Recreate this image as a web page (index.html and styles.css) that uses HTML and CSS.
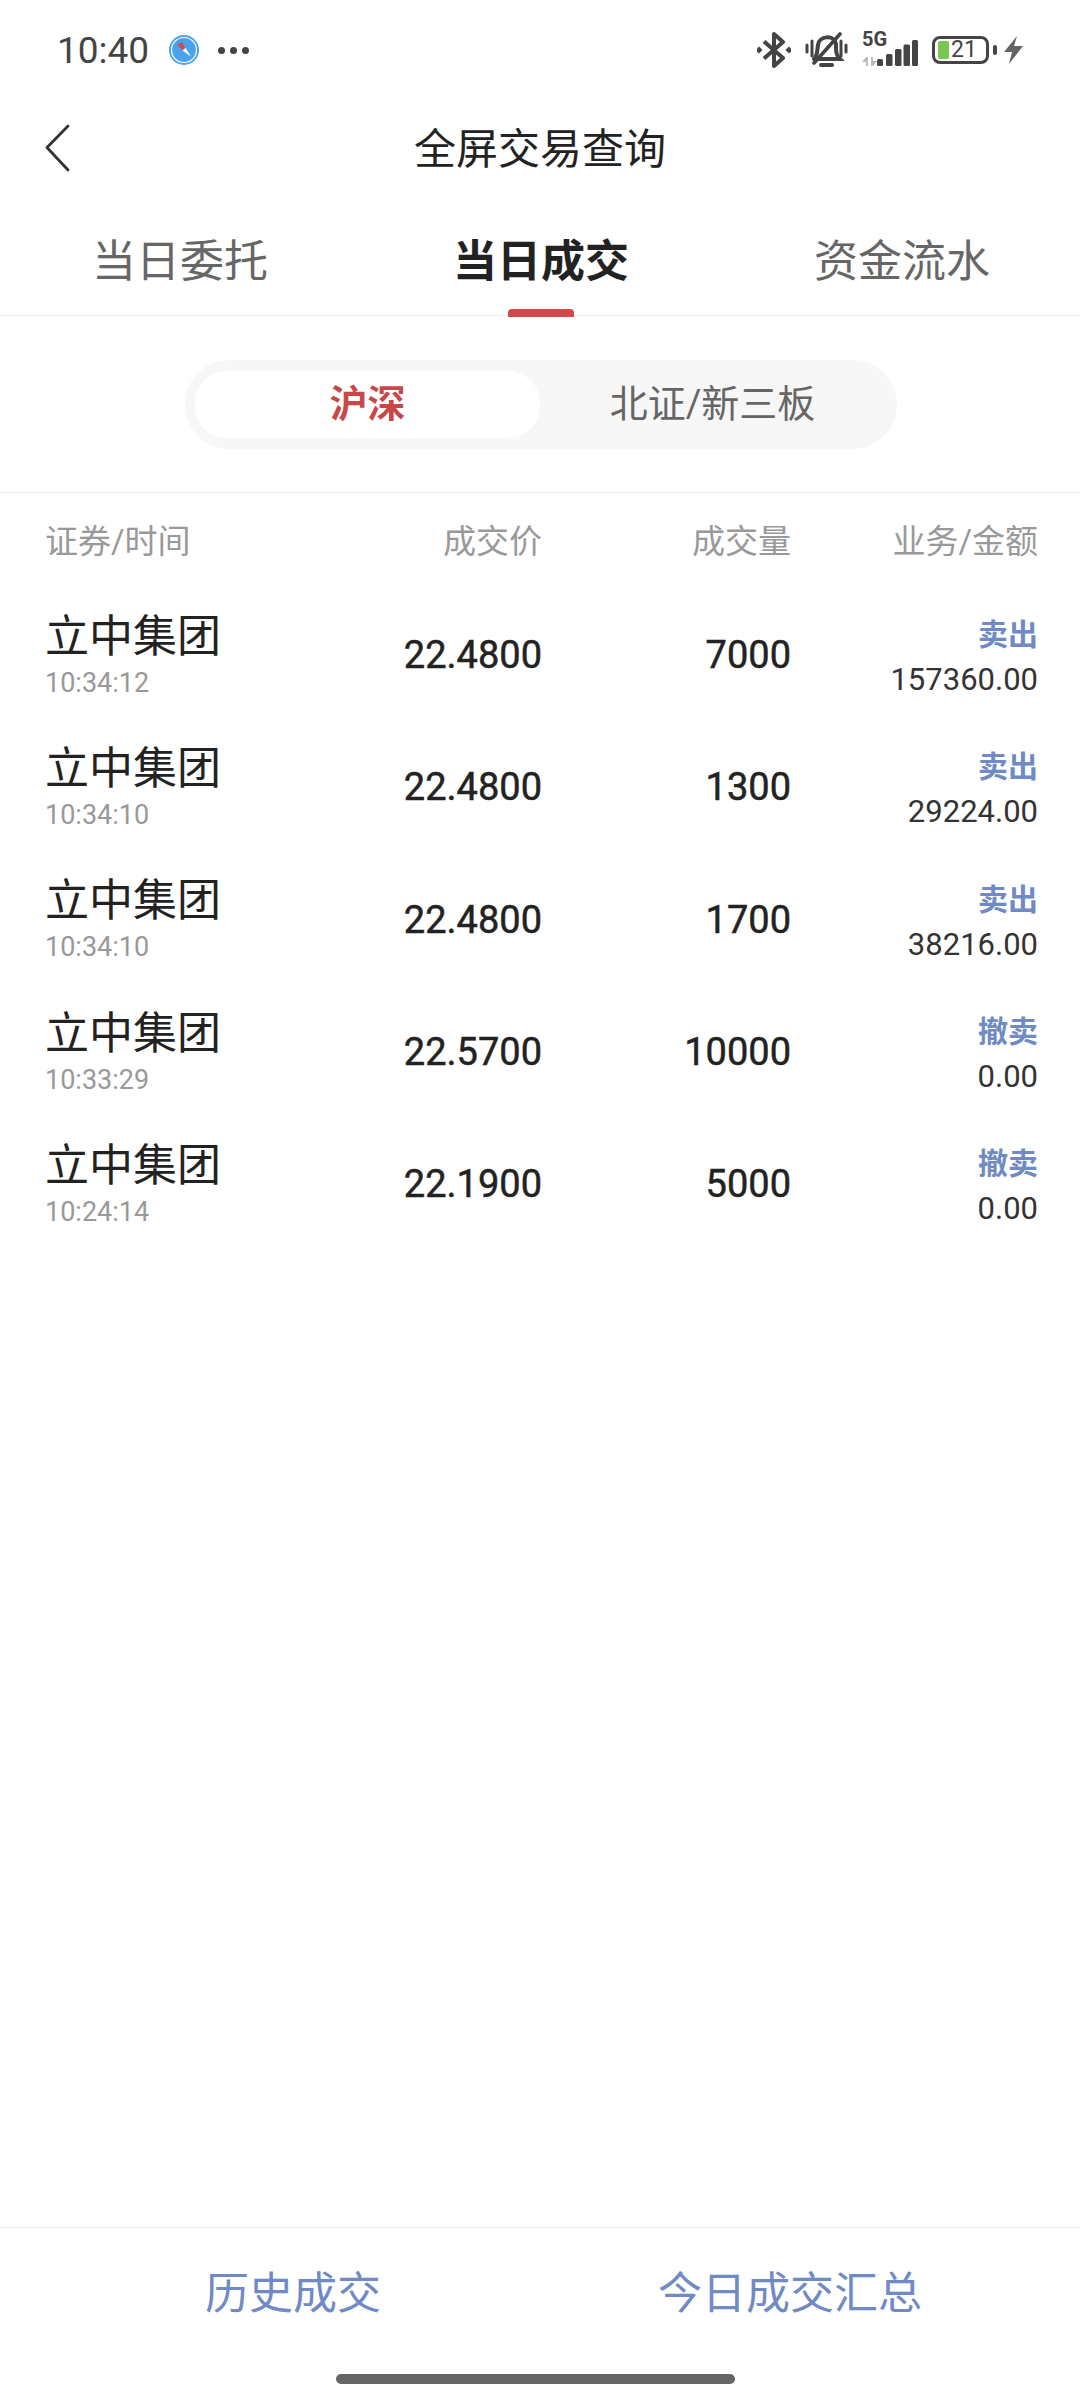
FILE: index.html
```html
<!DOCTYPE html>
<html lang="zh-CN">
<head>
    <meta charset="UTF-8">
    <meta name="viewport" content="width=device-width, initial-scale=1.0">
    <title>全屏交易查询</title>
    <link rel="stylesheet" href="styles.css">
</head>
<body>

<div class="page">
    <div class="status-bar">
        <span class="clock">10:40</span>
        <svg class="compass" width="30" height="30" viewBox="0 0 30 30">
            <circle cx="15" cy="15" r="15" fill="#4aa3ea"/>
            <circle cx="15" cy="15" r="12.500" fill="#4aa3ea" stroke="#fff" stroke-width="1.200"/>
            <path d="M8 9 L13 7.500 L16.500 13 L13.500 15.500 Z" fill="#c8504f"/>
            <path d="M13.500 15.500 L16.500 13 L22 21.500 Z" fill="#fff"/>
        </svg>
        <span class="dots"><i></i><i></i><i></i></span>
        <span class="status-right">
            <svg class="ic-bt" width="34" height="36" viewBox="0 0 34 36" fill="none" stroke="#444" stroke-width="4" stroke-linejoin="round">
                <path d="M7 9.500 L26 26 L17 34 V2 L26 10 L7 26.500"/>
                <rect x="-0.500" y="15.500" width="5" height="5" transform="rotate(45 2 18)" fill="#444" stroke="none"/>
                <rect x="29.500" y="15.500" width="5" height="5" transform="rotate(45 32 18)" fill="#444" stroke="none"/>
            </svg>
            <svg class="ic-bell" width="43" height="36" viewBox="0 0 43 36" fill="none" stroke="#444" stroke-width="4" stroke-linecap="round">
                <path d="M9 27 C13 23 12 18 13 13 C14 4 29 2 31 12 L31 17 C31 22 32 24 35 27 H9"/>
                <path d="M16 33 H27" stroke-width="4"/>
                <path d="M9 31 L35 2" stroke-width="3.600"/>
                <path d="M2 13 V20 M7 9 V24 M36 9 V24 M41 13 V20" stroke-width="3"/>
            </svg>
            <span class="net">
                <span class="net-label">5G</span>
                <svg class="ic-arrows" width="15" height="9" viewBox="0 0 15 9"><path d="M0 5 L4 0 H6 V9 H4 V5 Z M9 0 H11 V4 H15 L11 9 H9 Z" fill="#bbb"/></svg>
                <svg class="ic-signal" width="41" height="26" viewBox="0 0 41 26" fill="#444">
                    <rect x="0" y="19" width="6" height="7" rx="1.500"/>
                    <rect x="9" y="14" width="6.500" height="12" rx="1.500"/>
                    <rect x="18" y="9" width="6.500" height="17" rx="1.500"/>
                    <rect x="26.500" y="4.500" width="6.500" height="21.500" rx="1.500"/>
                    <rect x="35" y="0" width="6" height="26" rx="1.500"/>
                </svg>
            </span>
            <span class="battery"><i class="battery-fill"></i><b>21</b></span>
            <i class="battery-nub"></i>
            <svg class="ic-bolt" width="19" height="28" viewBox="0 0 19 28"><path d="M13 0 L0 16 H8 L5 28 L19 10 H10 Z" fill="#666"/></svg>
        </span>
    </div>

    <div class="nav-bar">
        <svg class="back" width="25" height="48" viewBox="0 0 25 48" fill="none" stroke="#333" stroke-width="2.800" stroke-linecap="round" stroke-linejoin="round">
            <path d="M23 2 L2 23.500 L23 46"/>
        </svg>
        <span class="nav-title">全屏交易查询</span>
    </div>

    <div class="tabs">
        <span class="tab">当日委托</span>
        <span class="tab active">当日成交</span>
        <span class="tab">资金流水</span>
    </div>

    <div class="segment-wrap">
        <div class="segment">
            <span class="seg-item on">沪深</span>
            <span class="seg-item">北证/新三板</span>
        </div>
    </div>

    <div class="list">
        <div class="row head">
            <span class="name-col">证券/时间</span>
            <span>成交价</span>
            <span>成交量</span>
            <span>业务/金额</span>
        </div>
        <div class="row">
            <div class="name-col"><div class="name">立中集团</div><div class="time">10:34:12</div></div>
            <span class="num">22.4800</span>
            <span class="num">7000</span>
            <div class="biz"><div class="biz-type">卖出</div><div class="amount">157360.00</div></div>
        </div>
        <div class="row">
            <div class="name-col"><div class="name">立中集团</div><div class="time">10:34:10</div></div>
            <span class="num">22.4800</span>
            <span class="num">1300</span>
            <div class="biz"><div class="biz-type">卖出</div><div class="amount">29224.00</div></div>
        </div>
        <div class="row">
            <div class="name-col"><div class="name">立中集团</div><div class="time">10:34:10</div></div>
            <span class="num">22.4800</span>
            <span class="num">1700</span>
            <div class="biz"><div class="biz-type">卖出</div><div class="amount">38216.00</div></div>
        </div>
        <div class="row">
            <div class="name-col"><div class="name">立中集团</div><div class="time">10:33:29</div></div>
            <span class="num">22.5700</span>
            <span class="num">10000</span>
            <div class="biz"><div class="biz-type">撤卖</div><div class="amount">0.00</div></div>
        </div>
        <div class="row">
            <div class="name-col"><div class="name">立中集团</div><div class="time">10:24:14</div></div>
            <span class="num">22.1900</span>
            <span class="num">5000</span>
            <div class="biz"><div class="biz-type">撤卖</div><div class="amount">0.00</div></div>
        </div>
    </div>

    <div class="bottom-bar">
        <span class="bottom-btn left">历史成交</span>
        <span class="bottom-btn right">今日成交汇总</span>
    </div>
    <div class="home-area"><i class="home-bar"></i></div>
</div>

</body>
</html>
```

FILE: styles.css
```css
* {
    box-sizing: border-box;
}
body {
    margin: 0;
    background: #fff;
    font-family: Roboto, "Noto Sans CJK SC", sans-serif;
    color: #222;
}
i {
    display: block;
}
.page {
    width: 1080px;
    height: 2400px;
    display: flex;
    flex-direction: column;
}

/* status bar */
.status-bar {
    height: 100px;
    padding: 0 57px;
    display: flex;
    align-items: center;
}
.clock {
    font-size: 37px;
    color: #444;
    width: 112px;
}
.compass {
    margin-right: 19px;
}
.dots {
    display: flex;
    gap: 5px;
}
.dots i {
    width: 7px;
    height: 7px;
    border-radius: 50%;
    background: #444;
}
.status-right {
    margin-left: auto;
    display: flex;
    align-items: center;
}
.ic-bt {
    margin-right: 14px;
}
.ic-bell {
    margin-right: 14px;
}
.net {
    width: 56px;
    height: 32px;
    display: block;
    position: relative;
    margin-right: 14px;
}
.net-label {
    position: absolute;
    left: 0;
    top: -5px;
    font-size: 20px;
    line-height: 20px;
    font-weight: 700;
    color: #444;
}
.ic-arrows {
    position: absolute;
    left: 0;
    bottom: 0;
}
.ic-signal {
    position: absolute;
    right: 0;
    bottom: 0;
}
.battery {
    width: 57px;
    height: 28px;
    border: 3px solid #444;
    border-radius: 8px;
    display: flex;
    align-items: center;
    padding-left: 3px;
    gap: 2px;
}
.battery-fill {
    width: 11px;
    height: 18px;
    background: #7ac754;
    border-radius: 2px;
}
.battery b {
    font-weight: 400;
    font-size: 23px;
    line-height: 22px;
    color: #444;
}
.battery-nub {
    width: 4px;
    height: 10px;
    margin: 0 7px 0 4px;
    background: #444;
    border-radius: 2px;
}

/* nav */
.nav-bar {
    height: 96px;
    position: relative;
    display: flex;
    align-items: center;
    justify-content: center;
}
.back {
    position: absolute;
    left: 45px;
    top: 24px;
}
.nav-title {
    font-size: 42px;
    color: #222;
    padding-bottom: 5px;
}

/* tabs */
.tabs {
    height: 120px;
    display: flex;
    align-items: center;
    justify-content: space-between;
    padding: 0 90px 0 92px;
    border-bottom: 1px solid #ececec;
}
.tab {
    font-size: 44px;
    color: #666;
    position: relative;
    height: 120px;
    line-height: 132px;
}
.tab.active {
    font-weight: 700;
    color: #222;
}
.tab.active::after {
    content: "";
    position: absolute;
    left: 50%;
    bottom: -1px;
    width: 66px;
    height: 8px;
    margin-left: -33px;
    background: #d0484a;
    border-radius: 4px 4px 0 0;
}

/* segment */
.segment-wrap {
    height: 177px;
    padding-top: 44px;
    border-bottom: 1px solid #ececec;
}
.segment {
    width: 712px;
    height: 89px;
    margin-left: 185px;
    padding: 11px 10px;
    border-radius: 44px;
    background: #f7f7f7;
    display: flex;
}
.seg-item {
    width: 345px;
    height: 67px;
    font-size: 38px;
    line-height: 67px;
    text-align: center;
    color: #666;
    border-radius: 32px;
}
.seg-item.on {
    background: #fff;
    color: #c8484a;
    font-weight: 700;
}

/* list */
.list {
    flex: 1;
}
.row {
    height: 132.3px;
    padding: 0 42px 0 45px;
    display: grid;
    grid-template-columns: 260px 237px 249px 247px;
    align-items: center;
    text-align: right;
}
.row.head {
    height: 96px;
    padding-bottom: 4px;
    font-size: 33px;
    color: #999;
}
.name-col {
    text-align: left;
}
.name {
    font-size: 44px;
    line-height: 52px;
    color: #222;
}
.time {
    font-size: 27px;
    line-height: 34px;
    margin-top: 3px;
    color: #999;
}
.num {
    font-size: 38px;
    color: #222;
    -webkit-text-stroke: 0.5px #222;
}
.biz {
    padding-top: 7px;
}
.biz-type {
    font-size: 30px;
    line-height: 36px;
    font-weight: 700;
    color: #6f8ac4;
}
.amount {
    font-size: 31px;
    line-height: 40px;
    margin-top: 7px;
    color: #333;
}

/* bottom */
.bottom-bar {
    height: 130px;
    border-top: 1px solid #ececec;
    display: flex;
    align-items: center;
    font-size: 44px;
    color: #6f8ac4;
    padding-bottom: 6px;
}
.bottom-btn.left {
    width: 586px;
    text-align: center;
}
.bottom-btn.right {
    width: 408px;
    text-align: center;
}
.home-area {
    height: 43px;
    display: flex;
    justify-content: center;
    padding-top: 17px;
}
.home-bar {
    width: 399px;
    height: 10px;
    margin-left: -9px;
    background: #666;
    border-radius: 5px;
}
```
